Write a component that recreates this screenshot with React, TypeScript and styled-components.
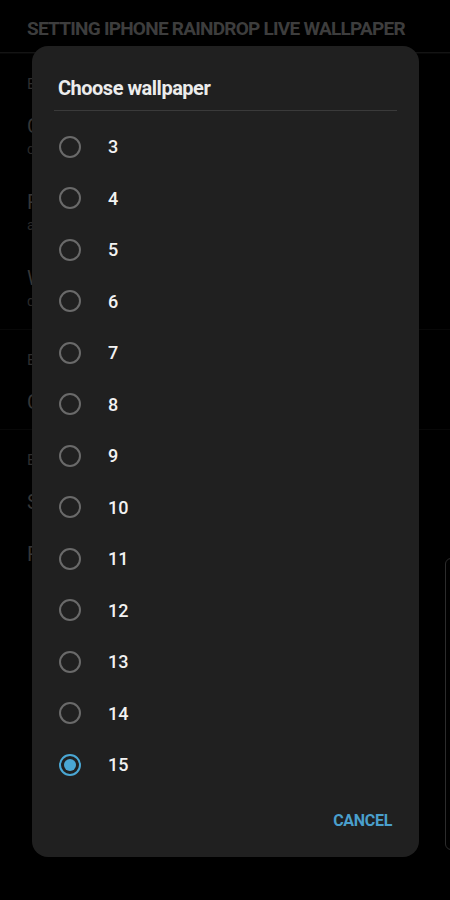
import React from "react";
import styled, { createGlobalStyle } from "styled-components";

const Global = createGlobalStyle`
  html, body { margin: 0; padding: 0; background: #000; }
  body { font-family: Roboto, "Noto Sans", "Liberation Sans", sans-serif; }
`;

const options = ["3", "4", "5", "6", "7", "8", "9", "10", "11", "12", "13", "14", "15"];
const selected = "15";

const bgItems: Array<{ kind: "cat" | "item"; title: string; sub?: string }> = [
  { kind: "cat", title: "Effects" },
  { kind: "item", title: "Choose wallpaper", sub: "choose a background image" },
  { kind: "item", title: "Rain intensity", sub: "amount of raindrops" },
  { kind: "item", title: "Wind", sub: "direction of the rain" },
  { kind: "cat", title: "Extras" },
  { kind: "item", title: "Custom image" },
  { kind: "cat", title: "Extras" },
  { kind: "item", title: "Share" },
  { kind: "item", title: "Rate app" },
];

export default function App() {
  return (
    <Page>
      <Global />
      <Header>SETTING IPHONE RAINDROP LIVE WALLPAPER</Header>
      <SettingsList>
        {bgItems.map((it, i) =>
          it.kind === "cat" ? (
            <Category key={i}>{it.title}</Category>
          ) : (
            <SettingRow key={i} $tall={!!it.sub}>
              <SettingTitle>{it.title}</SettingTitle>
              {it.sub && <SettingSub>{it.sub}</SettingSub>}
            </SettingRow>
          )
        )}
      </SettingsList>
      <ScrollHint />
      <Dialog>
        <DialogTitle>Choose wallpaper</DialogTitle>
        <Divider />
        <OptionList>
          {options.map((o) => (
            <Option key={o}>
              <Radio $on={o === selected} />
              <OptionLabel>{o}</OptionLabel>
            </Option>
          ))}
        </OptionList>
        <Actions>
          <TextButton>CANCEL</TextButton>
        </Actions>
      </Dialog>
    </Page>
  );
}

const Page = styled.div`
  position: relative;
  width: 450px;
  height: 900px;
  overflow: hidden;
  background: #000;
`;

const Header = styled.div`
  height: 53px;
  box-sizing: border-box;
  padding: 17px 0 0 27px;
  font-size: 19px;
  font-weight: 700;
  letter-spacing: -0.75px;
  color: #3d3d3d;
  border-bottom: 1px solid #141414;
  white-space: nowrap;
`;

const SettingsList = styled.div`
  display: flex;
  flex-direction: column;
`;

const Category = styled.div`
  height: 48px;
  box-sizing: border-box;
  padding: 20px 0 0 27px;
  font-size: 15px;
  line-height: 20px;
  color: #2e2e2e;
  border-top: 1px solid #080808;
`;

const SettingRow = styled.div<{ $tall: boolean }>`
  height: ${(p) => (p.$tall ? 76 : 52)}px;
  box-sizing: border-box;
  padding: 13px 0 0 27px;
  display: flex;
  flex-direction: column;
  gap: 3px;
`;

const SettingTitle = styled.div`
  font-size: 20px;
  line-height: 24px;
  color: #363636;
`;

const SettingSub = styled.div`
  font-size: 14px;
  line-height: 16px;
  color: #2a2a2a;
`;

const ScrollHint = styled.div`
  position: absolute;
  left: 445px;
  top: 558px;
  width: 10px;
  height: 290px;
  border: 1px solid #2c2c2c;
  border-radius: 6px;
`;

const Dialog = styled.div`
  position: absolute;
  left: 32px;
  top: 46px;
  width: 387px;
  height: 811px;
  box-sizing: border-box;
  background: #202020;
  border-radius: 16px;
  padding: 30px 22px 0 22px;
  display: flex;
  flex-direction: column;
`;

const DialogTitle = styled.div`
  padding-left: 4px;
  font-size: 20px;
  font-weight: 700;
  letter-spacing: -0.5px;
  color: #ececec;
  line-height: 24px;
`;

const Divider = styled.div`
  height: 1px;
  background: #3a3a3a;
  margin-top: 10px;
`;

const OptionList = styled.div`
  display: flex;
  flex-direction: column;
  margin-top: 10px;
`;

const Option = styled.div`
  height: 51.5px;
  display: flex;
  align-items: center;
  gap: 27px;
  padding-left: 5px;
`;

const Radio = styled.span<{ $on: boolean }>`
  position: relative;
  width: 22px;
  height: 22px;
  box-sizing: border-box;
  border-radius: 50%;
  border: 2px solid ${(p) => (p.$on ? "#4aa7d4" : "#6a6a6a")};
  &::after {
    content: "";
    display: ${(p) => (p.$on ? "block" : "none")};
    position: absolute;
    left: 3px;
    top: 3px;
    width: 12px;
    height: 12px;
    border-radius: 50%;
    background: #4aa7d4;
  }
`;

const OptionLabel = styled.span`
  font-size: 18px;
  font-weight: 500;
  color: #f2f2f2;
`;

const Actions = styled.div`
  display: flex;
  justify-content: flex-end;
  margin-top: 20px;
`;

const TextButton = styled.button`
  background: none;
  border: none;
  padding: 0 5px 0 0;
  font-family: Roboto, "Liberation Sans", sans-serif;
  font-size: 16px;
  font-weight: 700;
  letter-spacing: -0.3px;
  color: #4a9fcc;
`;
